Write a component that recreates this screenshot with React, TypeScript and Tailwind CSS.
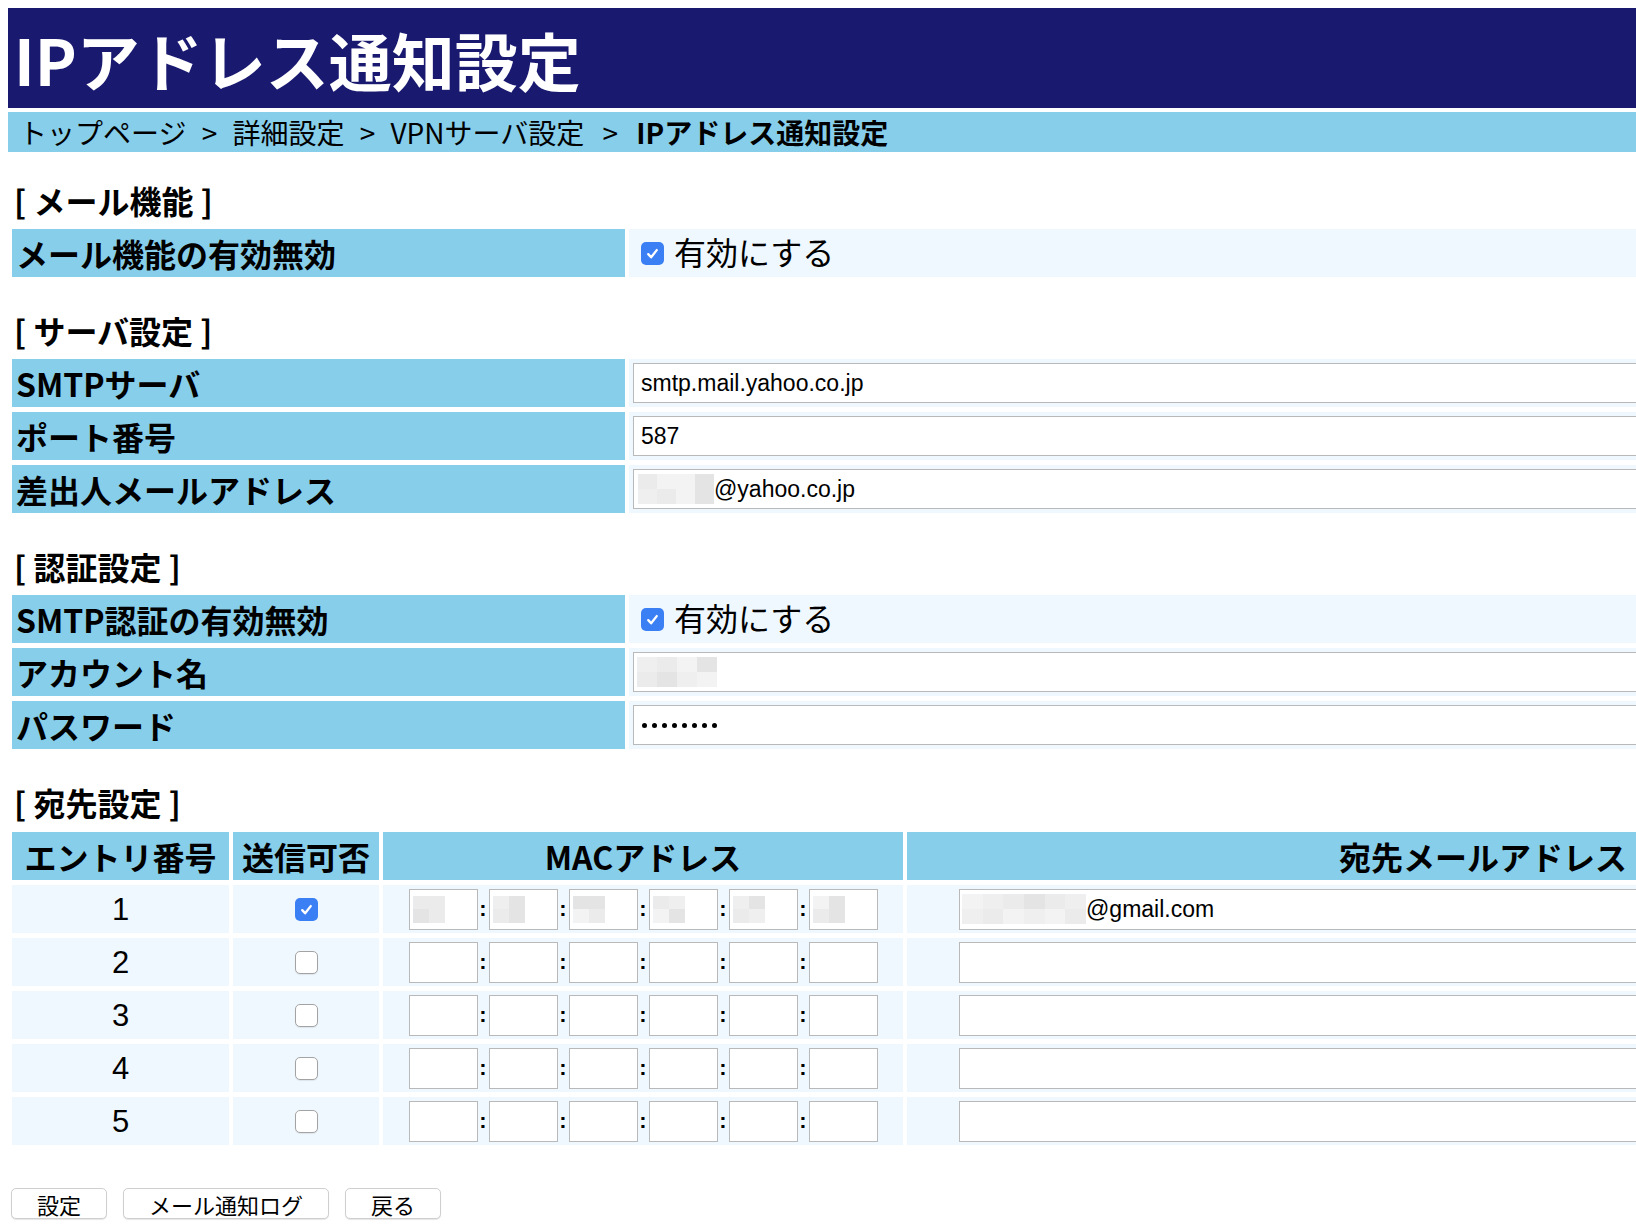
import type { ReactNode } from 'react';

const SKY = 'bg-[#87ceeb]';
const ALICE = 'bg-[#f0f8ff]';

function Check({ on }: { on: boolean }) {
  if (!on) {
    return <span className="block h-[23px] w-[23px] rounded-[5px] border border-[#a3a3a3] bg-white shadow-[0_1px_1px_rgba(0,0,0,0.08)]" />;
  }
  return (
    <span className="flex h-[23px] w-[23px] items-center justify-center rounded-[5px] bg-[#3b7ff5]">
      <svg viewBox="0 0 16 16" className="h-[17px] w-[17px]" fill="none" stroke="white" strokeWidth="2.2" strokeLinecap="round" strokeLinejoin="round">
        <path d="M4 8.6l2.7 3L12 4.8" />
      </svg>
    </span>
  );
}

// pixelated grey block standing in for redacted text
function Mosaic({ size, cells, cols }: { size: string; cells: string[]; cols: string }) {
  return (
    <div className={`grid ${cols} ${size}`}>
      {cells.map((c, i) => (
        <div key={i} className={c} />
      ))}
    </div>
  );
}

const G1 = 'bg-[#ebebeb]';
const G2 = 'bg-[#f3f3f3]';
const G3 = 'bg-[#e4e4e4]';
const G4 = 'bg-[#efefef]';

function Heading({ children, first }: { children: ReactNode; first?: boolean }) {
  return (
    <h2 className={`${first ? 'mt-[30px]' : 'mt-[35px]'} flex h-[36px] items-center pl-[6px] text-[32px] font-bold leading-none`}>
      [ {children} ]
    </h2>
  );
}

function Label({ children }: { children: ReactNode }) {
  return <div className={`flex h-[48px] items-center ${SKY} pl-[4px] text-[32px] font-bold leading-none`}>{children}</div>;
}

function TextBox({ children }: { children?: ReactNode }) {
  return (
    <div className={`flex h-[48px] items-center ${ALICE} px-[4px]`}>
      <div className="flex h-[40px] w-full items-center border border-[#b9b9b9] bg-white pl-[7px] font-['Liberation_Sans',sans-serif] text-[23px] leading-none">
        {children}
      </div>
    </div>
  );
}

function Enable() {
  return (
    <div className={`flex h-[48px] items-center ${ALICE} pl-[12px]`}>
      <Check on />
      <span className="mb-[4px] ml-[10px] text-[32px] leading-none">有効にする</span>
    </div>
  );
}

const macPatches = [
  [G1, G1, G3, G1],
  [G4, G3, G1, G3],
  [G3, G3, G2, G1],
  [G1, G4, G2, G3],
  [G4, G3, G1, G4],
  [G2, G3, G1, G3],
];

function MacCell({ filled }: { filled: boolean }) {
  return (
    <div className={`flex h-[48px] items-center justify-center ${ALICE}`}>
      {[0, 1, 2, 3, 4, 5].map((i) => (
        <div key={i} className="flex items-center">
          {i > 0 && <span className="w-[11px] text-center font-['Liberation_Sans',sans-serif] text-[22px] font-bold leading-none">:</span>}
          <div className="flex h-[41px] w-[69px] items-center border border-[#b9b9b9] bg-white pl-[3px]">
            {filled && <Mosaic size="h-[27px] w-[32px]" cols="grid-cols-2" cells={macPatches[i]} />}
          </div>
        </div>
      ))}
    </div>
  );
}

function Sep({ wide }: { wide?: boolean }) {
  return <span className={`inline-block ${wide ? 'w-[52px]' : 'w-[46px]'} text-center`}>&gt;</span>;
}

const entries = [1, 2, 3, 4, 5];

export default function App() {
  return (
    <div className="h-screen w-screen overflow-hidden bg-white font-['Noto_Sans_CJK_JP',sans-serif] text-black">
      <div className="w-[2068px] p-2">
        <h1 className="flex h-[100px] items-center bg-[#191970] pl-[6px] text-[63px] font-bold leading-none text-white">
          IPアドレス通知設定
        </h1>
        <div className={`mt-[4px] flex h-[40px] items-center ${SKY} pl-[11px] text-[28px] leading-none`}>
          <span>トップページ</span>
          <Sep />
          <span>詳細設定</span>
          <Sep />
          <span>VPNサーバ設定</span>
          <Sep wide />
          <b>IPアドレス通知設定</b>
        </div>

        <Heading first>メール機能</Heading>
        <div className="mt-[11px] grid grid-cols-[613px_1fr] gap-x-[4px] gap-y-[5px] px-[4px]">
          <Label>メール機能の有効無効</Label>
          <Enable />
        </div>

        <Heading>サーバ設定</Heading>
        <div className="mt-[11px] grid grid-cols-[613px_1fr] gap-x-[4px] gap-y-[5px] px-[4px]">
          <Label>SMTPサーバ</Label>
          <TextBox>smtp.mail.yahoo.co.jp</TextBox>
          <Label>ポート番号</Label>
          <TextBox>587</TextBox>
          <Label>差出人メールアドレス</Label>
          <TextBox>
            <Mosaic size="-ml-[3px] h-[30px] w-[76px]" cols="grid-cols-4" cells={[G1, G2, G2, G3, G4, G1, G2, G3]} />
            <span>@yahoo.co.jp</span>
          </TextBox>
        </div>

        <Heading>認証設定</Heading>
        <div className="mt-[11px] grid grid-cols-[613px_1fr] gap-x-[4px] gap-y-[5px] px-[4px]">
          <Label>SMTP認証の有効無効</Label>
          <Enable />
          <Label>アカウント名</Label>
          <TextBox>
            <Mosaic size="-ml-[4px] h-[30px] w-[80px]" cols="grid-cols-4" cells={[G4, G1, G2, G3, G1, G3, G4, G2]} />
          </TextBox>
          <Label>パスワード</Label>
          <TextBox>
            <div className="flex gap-[5px] pl-[1px]">
              {[0, 1, 2, 3, 4, 5, 6, 7].map((i) => (
                <span key={i} className="h-[5px] w-[5px] rounded-full bg-black" />
              ))}
            </div>
          </TextBox>
        </div>

        <Heading>宛先設定</Heading>
        <div className="mt-[12px] grid grid-cols-[217px_146px_520px_1152px] gap-x-[4px] gap-y-[5px] px-[4px]">
          <div className={`flex h-[48px] items-center justify-center ${SKY} text-[32px] font-bold leading-none`}>エントリ番号</div>
          <div className={`flex h-[48px] items-center justify-center ${SKY} text-[32px] font-bold leading-none`}>送信可否</div>
          <div className={`flex h-[48px] items-center justify-center ${SKY} text-[32px] font-bold leading-none`}>MACアドレス</div>
          <div className={`flex h-[48px] items-center justify-center ${SKY} text-[32px] font-bold leading-none`}>宛先メールアドレス</div>
          {entries.map((n) => (
            <div key={n} className="contents">
              <div className={`flex h-[48px] items-center justify-center ${ALICE} font-['Liberation_Sans',sans-serif] text-[31px] leading-none`}>{n}</div>
              <div className={`flex h-[48px] items-center justify-center ${ALICE}`}>
                <Check on={n === 1} />
              </div>
              <MacCell filled={n === 1} />
              <div className={`flex h-[48px] items-center ${ALICE} px-[52px]`}>
                <div className="flex h-[41px] w-full items-center border border-[#b9b9b9] bg-white pl-[2px] font-['Liberation_Sans',sans-serif] text-[23px] leading-none">
                  {n === 1 && (
                    <>
                      <Mosaic size="h-[30px] w-[124px]" cols="grid-cols-6" cells={[G2, G4, G1, G3, G1, G4, G4, G1, G2, G4, G2, G1]} />
                      <span>@gmail.com</span>
                    </>
                  )}
                </div>
              </div>
            </div>
          ))}
        </div>

        <div className="mt-[43px] flex gap-[16px] pl-[3px]">
          {['設定', 'メール通知ログ', '戻る'].map((t) => (
            <button
              key={t}
              className="h-[31px] rounded-[5px] border border-[#cfcfcf] bg-white px-[25px] text-[22px] leading-none shadow-[0_1px_1px_rgba(0,0,0,0.1)]"
            >
              {t}
            </button>
          ))}
        </div>
      </div>
    </div>
  );
}
